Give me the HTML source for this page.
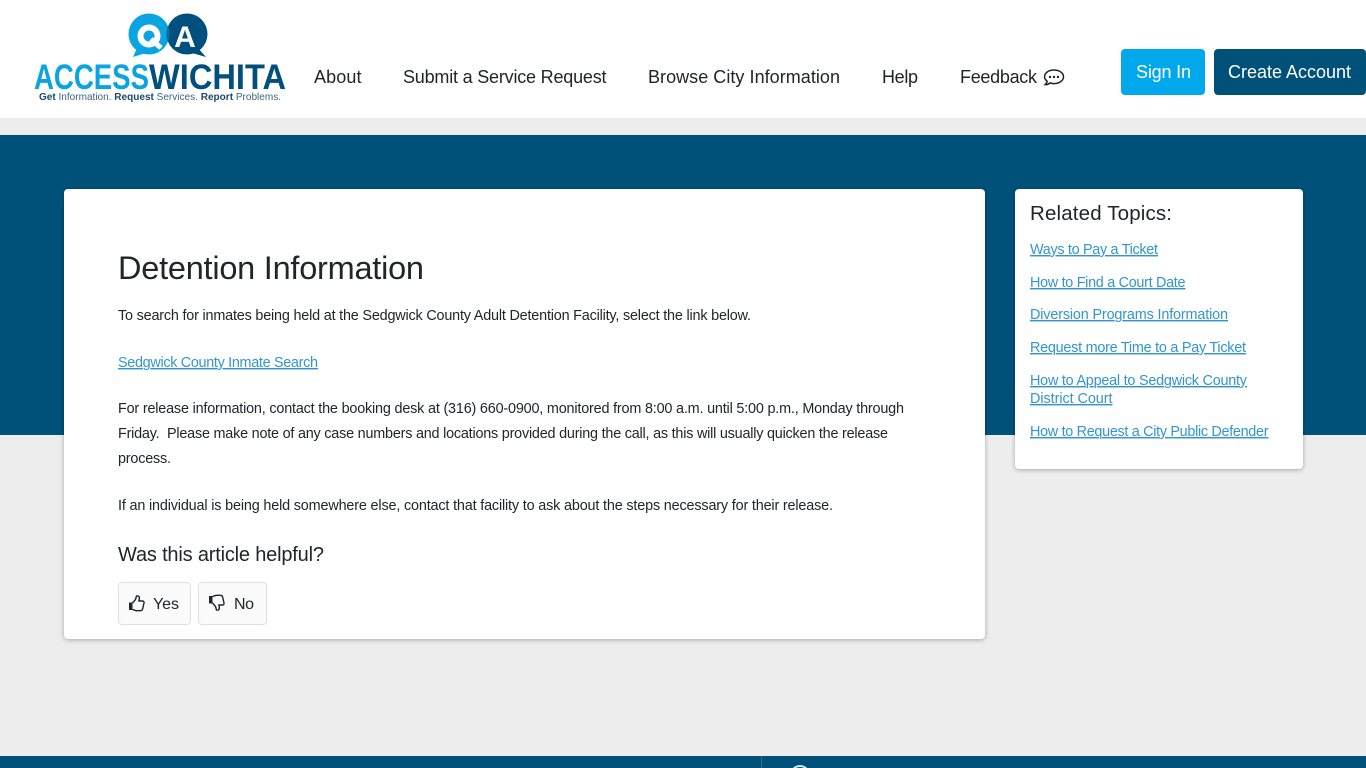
<!DOCTYPE html>
<html lang="en">
<head>
<meta charset="utf-8">
<title>Detention Information</title>
<style>
html,body{margin:0;padding:0;width:1366px;height:768px;overflow:hidden;background:#ededed}
.a{position:absolute;box-sizing:border-box}
svg{position:absolute;left:0;top:0}
text{font-family:"Liberation Sans",sans-serif}
.n{font-size:18px;fill:#212529}
.b{font-size:14.4px;fill:#212529}
.l{font-size:14.4px;fill:#3295cd;text-decoration:underline}
</style>
</head>
<body>
<div class="a" style="left:0;top:0;width:1366px;height:118px;background:#fff"></div>
<div class="a" style="left:0;top:135px;width:1366px;height:300px;background:#00517a"></div>
<div class="a" style="left:0;top:756px;width:1366px;height:12px;background:#00517a"></div>
<div class="a" style="left:761px;top:756px;width:1px;height:12px;background:#2d7094"></div>
<div class="a" style="left:1121px;top:49px;width:84px;height:46px;background:#02a8ec;border-radius:4px"></div>
<div class="a" style="left:1214px;top:49px;width:152px;height:46px;background:#00517a;border-radius:4px"></div>
<div class="a" style="left:64px;top:189px;width:921px;height:450px;background:#fff;border-radius:4px;box-shadow:0 1px 5px rgba(0,0,0,.3)"></div>
<div class="a" style="left:1015px;top:189px;width:288px;height:280px;background:#fff;border-radius:4px;box-shadow:0 1px 5px rgba(0,0,0,.3)"></div>
<div class="a" style="left:118px;top:582px;width:73px;height:43px;background:#fbfbfb;border:1px solid #dedede;border-radius:4px"></div>
<div class="a" style="left:198px;top:582px;width:69px;height:43px;background:#fbfbfb;border:1px solid #dedede;border-radius:4px"></div>

<svg width="1366" height="768" viewBox="0 0 1366 768" xmlns="http://www.w3.org/2000/svg">
  <!-- logo -->
  <path d="M137 48 L133 57 L146 53 Z" fill="#0aa5e0"/>
  <circle cx="149" cy="34" r="20.500" fill="#0aa5e0"/>
  <path d="M198 48 L206 57 L192 53 Z" fill="#004f7c"/>
  <circle cx="187" cy="34" r="20.500" fill="#004f7c"/>
  <path d="M168 26 A20.500 20.500 0 0 1 168 42 A20.500 20.500 0 0 1 168 26Z" fill="#0a6f9f"/>
  <circle cx="149" cy="36" r="8.500" fill="none" stroke="#fff" stroke-width="6"/>
  <path d="M151 39 L161 48" stroke="#fff" stroke-width="5"/>
  <text x="185" y="47" text-anchor="middle" font-size="30" font-weight="700" fill="#fff">A</text>
  <text x="34" y="89" font-size="35" font-weight="700" fill="#0aa5e0" textLength="115" lengthAdjust="spacingAndGlyphs">ACCESS</text>
  <text x="149" y="89" font-size="35" font-weight="700" fill="#004f7c" textLength="137" lengthAdjust="spacingAndGlyphs">WICHITA</text>
  <text x="39" y="100" font-size="10.500" fill="#3a6581" textLength="242" lengthAdjust="spacingAndGlyphs"><tspan font-weight="700" fill="#1c4a6a">Get</tspan> Information. <tspan font-weight="700" fill="#1c4a6a">Request</tspan> Services. <tspan font-weight="700" fill="#1c4a6a">Report</tspan> Problems.</text>

  <!-- nav -->
  <text class="n" x="314" y="83" textLength="47.5">About</text>
  <text class="n" x="403" y="83" textLength="203.5">Submit a Service Request</text>
  <text class="n" x="648" y="83" textLength="192">Browse City Information</text>
  <text class="n" x="882" y="83" textLength="36">Help</text>
  <text class="n" x="960" y="83" textLength="77">Feedback</text>
  <path d="M1054 70 C1059.500 70 1063.500 73 1063.500 76.800 C1063.500 80.600 1059.500 83.600 1054 83.600 C1052.500 83.600 1051.200 83.400 1050 83 C1048.800 84 1047 84.800 1045.200 84.600 C1046.300 83.600 1047 82.500 1047.200 81.300 C1045.600 80 1044.500 78.500 1044.500 76.800 C1044.500 73 1048.500 70 1054 70Z" fill="none" stroke="#212529" stroke-width="1.500"/>
  <circle cx="1050" cy="77" r="1.200" fill="#212529"/><circle cx="1054" cy="77" r="1.200" fill="#212529"/><circle cx="1058" cy="77" r="1.200" fill="#212529"/>

  <text x="1136" y="78" font-size="18" fill="#fff" textLength="55">Sign In</text>
  <text x="1228" y="78" font-size="18" fill="#fff" textLength="123">Create Account</text>

  <!-- article -->
  <text x="118" y="279" font-size="32.500" fill="#212529" textLength="306">Detention Information</text>
  <text class="b" x="118" y="320" textLength="633">To search for inmates being held at the Sedgwick County Adult Detention Facility, select the link below.</text>
  <text class="l" x="118" y="367" textLength="200">Sedgwick County Inmate Search</text>
  <text class="b" x="118" y="413" textLength="786">For release information, contact the booking desk at (316) 660-0900, monitored from 8:00 a.m. until 5:00 p.m., Monday through</text>
  <text class="b" x="118" y="438" textLength="770" xml:space="preserve">Friday.  Please make note of any case numbers and locations provided during the call, as this will usually quicken the release</text>
  <text class="b" x="118" y="463" textLength="53">process.</text>
  <text class="b" x="118" y="510" textLength="715">If an individual is being held somewhere else, contact that facility to ask about the steps necessary for their release.</text>
  <text x="118" y="561" font-size="20" fill="#212529" textLength="206">Was this article helpful?</text>

  <!-- thumbs up -->
  <g transform="translate(129 595)">
    <rect x="0" y="7.500" width="3.500" height="7.500" fill="#212529"/>
    <path d="M3.500 8 L6.500 4.500 L7.500 1 C9.500 .3 10.800 2 10.300 4 L9.800 6 H13.500 C15 6 15.400 7.500 14.800 8.800 L13.600 14 C13.300 15.300 12.600 15.700 11.500 15.700 H7 L3.500 14.500" fill="none" stroke="#212529" stroke-width="1.400" stroke-linejoin="round"/>
  </g>
  <text x="153" y="609" font-size="16" fill="#212529" textLength="26">Yes</text>
  <!-- thumbs down -->
  <g transform="translate(209 595)">
    <rect x="0" y="1" width="3.500" height="7.500" fill="#212529"/>
    <path d="M3.500 8 L6.500 11.500 L7.500 15 C9.500 15.700 10.800 14 10.300 12 L9.800 10 H13.500 C15 10 15.400 8.500 14.800 7.200 L13.600 2 C13.300 .7 12.600 .3 11.500 .3 H7 L3.500 1.500" fill="none" stroke="#212529" stroke-width="1.400" stroke-linejoin="round"/>
  </g>
  <text x="234" y="609" font-size="16" fill="#212529" textLength="20">No</text>

  <!-- related -->
  <text x="1030" y="220" font-size="20.500" fill="#212529" textLength="142">Related Topics:</text>
  <text class="l" x="1030" y="254" textLength="128">Ways to Pay a Ticket</text>
  <text class="l" x="1030" y="287" textLength="155.500">How to Find a Court Date</text>
  <text class="l" x="1030" y="319" textLength="198">Diversion Programs Information</text>
  <text class="l" x="1030" y="352" textLength="216">Request more Time to a Pay Ticket</text>
  <text class="l" x="1030" y="385" textLength="217">How to Appeal to Sedgwick County</text>
  <text class="l" x="1030" y="403" textLength="82.500">District Court</text>
  <text class="l" x="1030" y="436" textLength="238.500">How to Request a City Public Defender</text>

  <!-- footer icon top -->
  <circle cx="800" cy="775" r="9" fill="none" stroke="#cfe3ec" stroke-width="2"/>
</svg>
</body>
</html>
